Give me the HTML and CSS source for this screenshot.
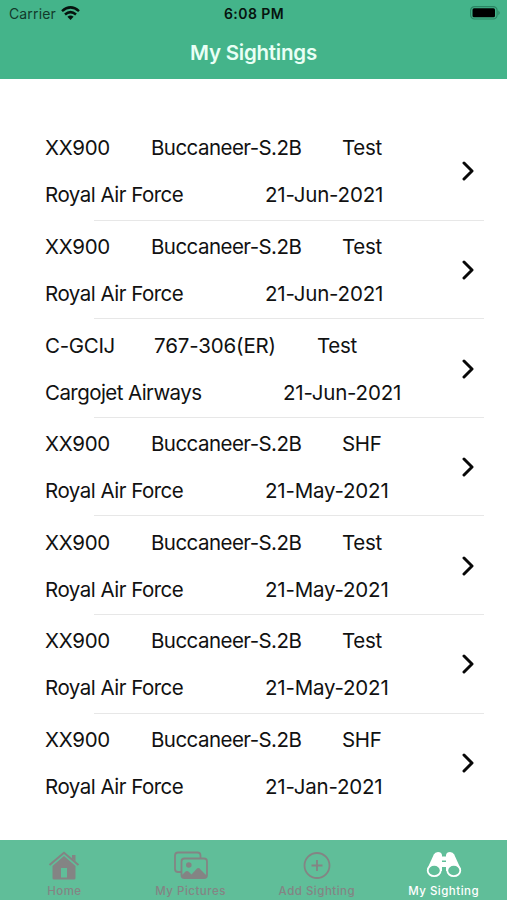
FILE: index.html
```html
<!DOCTYPE html>
<html lang="en">
<head>
<meta charset="utf-8">
<title>My Sightings</title>
<link rel="stylesheet" href="styles.css">
</head>
<body>
<header class="header">
  <div class="status">
    <div class="carrier"><span>Carrier</span>
      <svg class="wifi" width="19" height="14" viewBox="0 0 19 14"><g fill="none" stroke="#06130e" stroke-width="2.5"><path d="M1 5.100Q9.500-2.300 18 5.100"/><path d="M4 8.500Q9.500 3.700 15 8.500"/></g><path d="M6.400 10.800Q9.500 8.300 12.600 10.800L9.500 13.900Z" fill="#06130e"/></svg>
    </div>
    <div class="clock">6:08 PM</div>
    <svg class="battery" width="32" height="14" viewBox="0 0 32 14"><rect x="1.600" y=".6" width="26.500" height="12.400" rx="4" fill="none" stroke="#2a8563" stroke-width="1.200"/><rect x="3.500" y="2.300" width="22.500" height="9" rx="1.500" fill="#000"/><path d="M29.500 4.500Q31.700 6.800 29.500 9.200Z" fill="#2a7458"/></svg>
  </div>
  <h1 class="title">My Sightings</h1>
</header>
<main class="list">
  <article class="row"><div class="line"><span class="reg">XX900</span><span class="type">Buccaneer-S.2B</span><span class="tag">Test</span></div><div class="line second"><span class="operator">Royal Air Force</span><span class="date">21-Jun-2021</span></div><svg class="chevron" width="12" height="20" viewBox="0 0 12 20"><path d="M2 2L10 10L2 18"/></svg></article>
  <article class="row"><div class="line"><span class="reg">XX900</span><span class="type">Buccaneer-S.2B</span><span class="tag">Test</span></div><div class="line second"><span class="operator">Royal Air Force</span><span class="date">21-Jun-2021</span></div><svg class="chevron" width="12" height="20" viewBox="0 0 12 20"><path d="M2 2L10 10L2 18"/></svg></article>
  <article class="row cargo"><div class="line"><span class="reg">C-GCIJ</span><span class="type">767-306(ER)</span><span class="tag">Test</span></div><div class="line second"><span class="operator">Cargojet Airways</span><span class="date">21-Jun-2021</span></div><svg class="chevron" width="12" height="20" viewBox="0 0 12 20"><path d="M2 2L10 10L2 18"/></svg></article>
  <article class="row"><div class="line"><span class="reg">XX900</span><span class="type">Buccaneer-S.2B</span><span class="tag">SHF</span></div><div class="line second"><span class="operator">Royal Air Force</span><span class="date">21-May-2021</span></div><svg class="chevron" width="12" height="20" viewBox="0 0 12 20"><path d="M2 2L10 10L2 18"/></svg></article>
  <article class="row"><div class="line"><span class="reg">XX900</span><span class="type">Buccaneer-S.2B</span><span class="tag">Test</span></div><div class="line second"><span class="operator">Royal Air Force</span><span class="date">21-May-2021</span></div><svg class="chevron" width="12" height="20" viewBox="0 0 12 20"><path d="M2 2L10 10L2 18"/></svg></article>
  <article class="row"><div class="line"><span class="reg">XX900</span><span class="type">Buccaneer-S.2B</span><span class="tag">Test</span></div><div class="line second"><span class="operator">Royal Air Force</span><span class="date">21-May-2021</span></div><svg class="chevron" width="12" height="20" viewBox="0 0 12 20"><path d="M2 2L10 10L2 18"/></svg></article>
  <article class="row"><div class="line"><span class="reg">XX900</span><span class="type">Buccaneer-S.2B</span><span class="tag">SHF</span></div><div class="line second"><span class="operator">Royal Air Force</span><span class="date">21-Jan-2021</span></div><svg class="chevron" width="12" height="20" viewBox="0 0 12 20"><path d="M2 2L10 10L2 18"/></svg></article>
</main>
<nav class="tabs">
  <a class="tab home"><svg width="36" height="30" viewBox="0 0 36 30"><path d="M3.500 15L18 2.800L32.500 15" fill="none" stroke="currentColor" stroke-width="2"/><path d="M26 5H29.500V11.500L26 8.500Z" fill="currentColor"/><path fill-rule="evenodd" d="M18 6L29.500 16V28Q29.500 29.500 28 29.500H8Q6.500 29.500 6.500 28V16ZM15 18V27.500H21V18Z" fill="currentColor"/></svg><span>Home</span></a>
  <a class="tab pictures"><svg width="36" height="30" viewBox="0 0 36 30"><g fill="none" stroke="currentColor" stroke-width="1.800"><path d="M8 22H5Q2 22 2 19V5.500Q2 2.500 5 2.500H24.500Q27.500 2.500 27.500 5.500V8"/><rect x="8.500" y="8.500" width="25.500" height="19.500" rx="3"/></g><circle cx="15.800" cy="15" r="2.800" fill="currentColor"/><path d="M9 25L12 22Q14 20 16 22L18.500 24.500L23.500 19Q25.500 17 27.500 19.500L34 26V28H9Z" fill="currentColor"/></svg><span>My Pictures</span></a>
  <a class="tab"><svg width="36" height="30" viewBox="0 0 36 30"><g fill="none" stroke="currentColor" stroke-width="1.800"><circle cx="18" cy="15.500" r="12.500"/><path d="M18 10V21M12.500 15.500H23.500"/></g></svg><span>Add Sighting</span></a>
  <a class="tab active"><svg width="36" height="30" viewBox="0 0 36 30"><g fill="currentColor"><path d="M1.200 19L7.800 4.500Q9 2 12 2Q15.500 2 16 5V21H8Z"/><path d="M34.800 19L28.200 4.500Q27 2 24 2Q20.500 2 20 5V21H28Z"/><path d="M14 6.500H22V10.500H14ZM14 12H22V17H14Z"/></g><g fill="#60be99" stroke="currentColor" stroke-width="1.800"><ellipse cx="8.200" cy="20.500" rx="6.500" ry="5.700"/><ellipse cx="27.800" cy="20.500" rx="6.500" ry="5.700"/></g></svg><span>My Sighting</span></a>
</nav>
</body>
</html>
```
FILE: styles.css
```css
* { box-sizing: border-box; }
body { margin: 0; width: 507px; height: 900px; display: flex; flex-direction: column; overflow: hidden; background: #fff; color: #111; font-family: Inter, "Liberation Sans", sans-serif; }
.header { height: 79px; background: #44b48a; flex: none; }
.status { height: 27px; display: grid; grid-template-columns: 1fr 1fr 1fr; align-items: center; padding: 0 6px 0 9px; font-size: 14px; color: #06130e; }
.carrier { display: flex; align-items: center; gap: 5px; color: #123a2b; letter-spacing: .140px; }
.wifi { margin-top: -1px; }
.clock { text-align: center; font-size: 14px; font-weight: 600; letter-spacing: .450px; white-space: nowrap; position: relative; left: -1px; }
.battery { justify-self: end; margin-top: -1px; }
.title { margin: 11px 0 0; text-align: center; font-size: 20.500px; line-height: 30px; font-weight: 600; letter-spacing: -.230px; color: #e9fff5; }
.list { height: 761px; padding-top: 43px; flex: none; }
.row { height: 98.600px; display: grid; grid-template-columns: 1fr 45px; grid-template-rows: 47px 47px; padding: 2.400px 0 0 45px; background: linear-gradient(#e7e7e7, #e7e7e7) 94px 100% / 390px 1px no-repeat; }
.row:last-child { background: none; }
.line { grid-column: 1; display: flex; font-size: 20.500px; line-height: 47px; letter-spacing: -.320px; white-space: pre; }
.reg { width: 106px; }
.type { width: 191px; letter-spacing: -.550px; }
.operator { width: 220px; letter-spacing: -.500px; }
.date { letter-spacing: -.200px; }
.cargo .reg { width: 109px; }
.cargo .type { width: 163px; letter-spacing: -.150px; }
.cargo .operator { width: 238px; letter-spacing: -.570px; }
.chevron { grid-column: 2; grid-row: 1 / 3; align-self: center; fill: none; stroke: #080808; stroke-width: 3; stroke-linecap: round; stroke-linejoin: round; }
.tabs { height: 60px; background: #60be99; display: grid; grid-template-columns: repeat(4, 1fr); flex: none; }
.tab { display: flex; flex-direction: column; align-items: center; padding-top: 10px; color: #848484; font-size: 11.500px; font-weight: 500; white-space: nowrap; }
.tab span { line-height: 14px; margin-top: 4px; letter-spacing: .500px; }
.home { padding-left: 2px; }
.pictures { padding-left: 1px; }
.active { color: #fff; }
```
